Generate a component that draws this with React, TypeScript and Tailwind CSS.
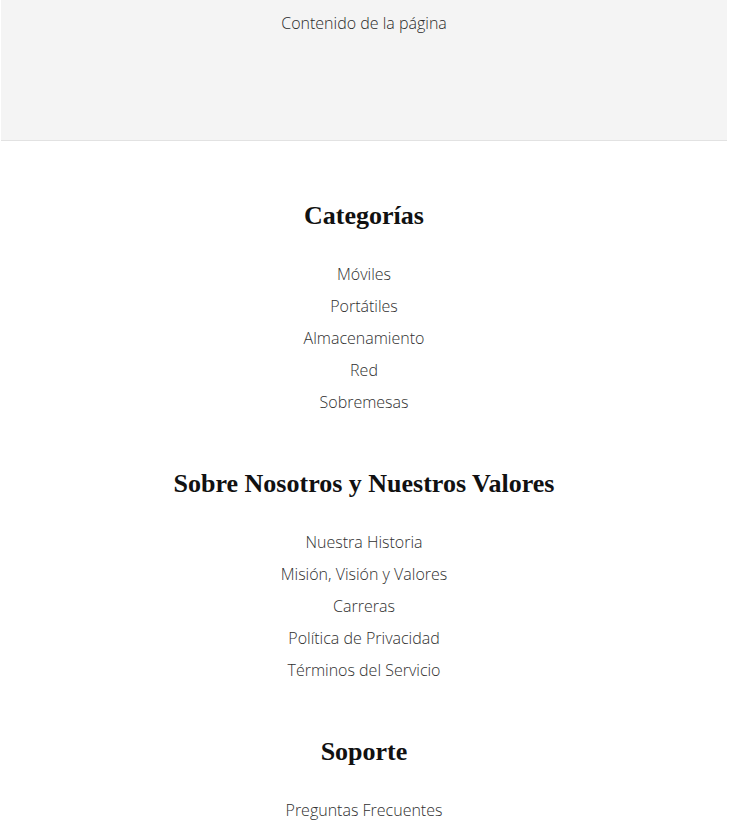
const sections = [
  {
    title: 'Categorías',
    links: ['Móviles', 'Portátiles', 'Almacenamiento', 'Red', 'Sobremesas'],
  },
  {
    title: 'Sobre Nosotros y Nuestros Valores',
    links: [
      'Nuestra Historia',
      'Misión, Visión y Valores',
      'Carreras',
      'Política de Privacidad',
      'Términos del Servicio',
    ],
  },
  {
    title: 'Soporte',
    links: ['Preguntas Frecuentes'],
  },
];

export default function App() {
  return (
    <div className="w-[728px] bg-white font-['Open_Sans','Lato',sans-serif] font-light text-[#333]">
      {/* Page content */}
      <main className="ml-[1px] h-[141px] w-[726px] border-b border-[#e2e2e2] bg-[#f4f4f4] pt-[11px] text-center text-[16px] leading-6 text-[#2a2a2a]">
        Contenido de la página
      </main>

      {/* Footer */}
      <footer className="flex flex-col items-center gap-12 pt-[57px] text-center">
        {sections.map((s) => (
          <section key={s.title} className="flex flex-col items-center">
            <h2 className="font-['Liberation_Serif','DejaVu_Serif',serif] text-[26px] font-bold leading-9 text-[#111]">
              {s.title}
            </h2>
            <ul className="mt-6">
              {s.links.map((l) => (
                <li key={l} className="text-[16px] leading-8 text-[#2f2f2f]">
                  <a href="#">{l}</a>
                </li>
              ))}
            </ul>
          </section>
        ))}
      </footer>
    </div>
  );
}
